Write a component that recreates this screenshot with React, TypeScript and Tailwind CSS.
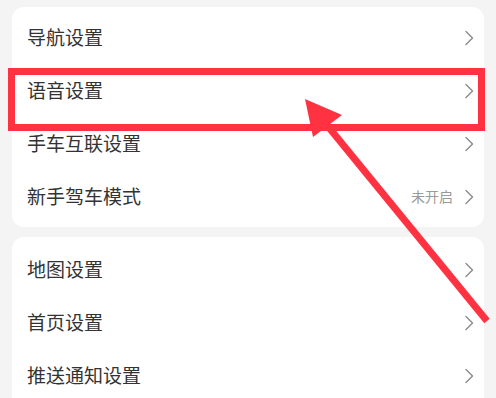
import React from 'react';

interface Row {
  label: string;
  value?: string;
}

const groupA: Row[] = [
  { label: '导航设置' },
  { label: '语音设置' },
  { label: '手车互联设置' },
  { label: '新手驾车模式', value: '未开启' },
];

const groupB: Row[] = [{ label: '地图设置' }, { label: '首页设置' }, { label: '推送通知设置' }];

const Chevron = () => (
  <svg width="10" height="16" viewBox="0 0 10 16" fill="none">
    <path d="M2 1.5 L8.5 8 L2 14.5" stroke="#8a8a8a" strokeWidth="1.4" strokeLinecap="round" strokeLinejoin="round" />
  </svg>
);

const SettingRow: React.FC<Row> = ({ label, value }) => (
  <div className="flex h-[53px] items-center justify-between pl-[15px] pr-[10px]">
    <span className="text-[19px] text-[#333333]">{label}</span>
    <div className="flex items-center gap-[11px]">
      {value && <span className="text-[14px] text-[#9a9a9a]">{value}</span>}
      <Chevron />
    </div>
  </div>
);

export default function App() {
  return (
    <div
      className="relative h-[398px] w-[496px] overflow-hidden bg-[#f4f4f4] px-[12px] pt-[7px]"
      style={{ fontFamily: '"Noto Sans CJK SC", "Noto Sans", sans-serif' }}
    >
      <div className="rounded-[12px] bg-white py-[4px]">
        {groupA.map((r) => (
          <SettingRow key={r.label} {...r} />
        ))}
      </div>
      <div className="mt-[10px] rounded-[12px] bg-white pt-[6px] pb-[6px]">
        {groupB.map((r) => (
          <SettingRow key={r.label} {...r} />
        ))}
      </div>

      {/* annotation: highlight box + arrow */}
      <svg className="pointer-events-none absolute inset-0" width="496" height="398" viewBox="0 0 496 398">
        <rect x="11.5" y="71.5" width="470" height="56" fill="none" stroke="#ff3242" strokeWidth="7" />
        <line x1="326" y1="124" x2="487" y2="321" stroke="#ff3242" strokeWidth="7" />
        <polygon points="305,99 342,115 313,137" fill="#ff3242" />
      </svg>
    </div>
  );
}
